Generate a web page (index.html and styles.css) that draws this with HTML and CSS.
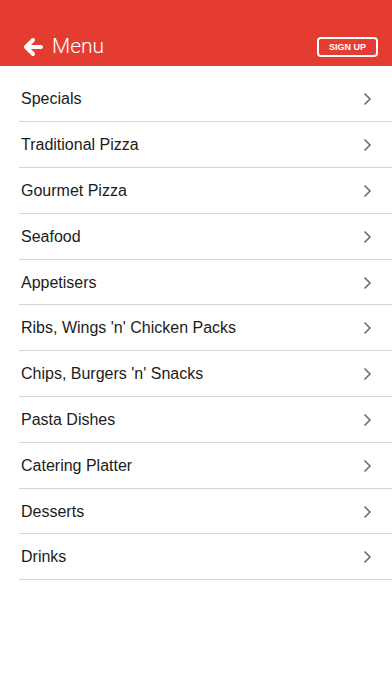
FILE: index.html
```html
<!DOCTYPE html>
<html>
<head>
<meta charset="utf-8">
<link rel="stylesheet" href="styles.css">
</head>
<body>
<header class="topbar">
  <div class="title">
    <svg class="back" width="20" height="20" viewBox="0 0 20 20" aria-hidden="true">
      <path d="M10 3 L3 10 L10 17 M3.5 10 H18" fill="none" stroke="#fff" stroke-width="4" stroke-linecap="round" stroke-linejoin="round"/>
    </svg>
    <span class="title-text">Menu</span>
  </div>
  <button class="signup">SIGN UP</button>
</header>
<ul class="menu">
  <li class="row"><span>Specials</span><svg class="chev" width="9" height="14" viewBox="0 0 9 14"><path d="M1.5 1.5 L7 7 L1.5 12.5" fill="none" stroke="#6e6e6e" stroke-width="1.6"/></svg></li>
  <li class="row"><span>Traditional Pizza</span><svg class="chev" width="9" height="14" viewBox="0 0 9 14"><path d="M1.5 1.5 L7 7 L1.5 12.5" fill="none" stroke="#6e6e6e" stroke-width="1.6"/></svg></li>
  <li class="row"><span>Gourmet Pizza</span><svg class="chev" width="9" height="14" viewBox="0 0 9 14"><path d="M1.5 1.5 L7 7 L1.5 12.5" fill="none" stroke="#6e6e6e" stroke-width="1.6"/></svg></li>
  <li class="row"><span>Seafood</span><svg class="chev" width="9" height="14" viewBox="0 0 9 14"><path d="M1.5 1.5 L7 7 L1.5 12.5" fill="none" stroke="#6e6e6e" stroke-width="1.6"/></svg></li>
  <li class="row"><span>Appetisers</span><svg class="chev" width="9" height="14" viewBox="0 0 9 14"><path d="M1.5 1.5 L7 7 L1.5 12.5" fill="none" stroke="#6e6e6e" stroke-width="1.6"/></svg></li>
  <li class="row"><span>Ribs, Wings 'n' Chicken Packs</span><svg class="chev" width="9" height="14" viewBox="0 0 9 14"><path d="M1.5 1.5 L7 7 L1.5 12.5" fill="none" stroke="#6e6e6e" stroke-width="1.6"/></svg></li>
  <li class="row"><span>Chips, Burgers 'n' Snacks</span><svg class="chev" width="9" height="14" viewBox="0 0 9 14"><path d="M1.5 1.5 L7 7 L1.5 12.5" fill="none" stroke="#6e6e6e" stroke-width="1.6"/></svg></li>
  <li class="row"><span>Pasta Dishes</span><svg class="chev" width="9" height="14" viewBox="0 0 9 14"><path d="M1.5 1.5 L7 7 L1.5 12.5" fill="none" stroke="#6e6e6e" stroke-width="1.6"/></svg></li>
  <li class="row"><span>Catering Platter</span><svg class="chev" width="9" height="14" viewBox="0 0 9 14"><path d="M1.5 1.5 L7 7 L1.5 12.5" fill="none" stroke="#6e6e6e" stroke-width="1.6"/></svg></li>
  <li class="row"><span>Desserts</span><svg class="chev" width="9" height="14" viewBox="0 0 9 14"><path d="M1.5 1.5 L7 7 L1.5 12.5" fill="none" stroke="#6e6e6e" stroke-width="1.6"/></svg></li>
  <li class="row"><span>Drinks</span><svg class="chev" width="9" height="14" viewBox="0 0 9 14"><path d="M1.5 1.5 L7 7 L1.5 12.5" fill="none" stroke="#6e6e6e" stroke-width="1.6"/></svg></li>
</ul>
</body>
</html>
```
FILE: styles.css
```css
* { box-sizing: border-box; }
html, body {
  margin: 0;
  padding: 0;
  background: #fff;
  font-family: "Liberation Sans", Arial, sans-serif;
}
.topbar {
  height: 66px;
  background: #e53c32;
  padding: 28px 14px 0 23px;
  display: flex;
  align-items: flex-start;
  justify-content: space-between;
}
.title {
  display: flex;
  align-items: center;
  height: 38px;
  gap: 9px;
}
.back { display: block; }
.title-text {
  color: #fff;
  font-family: Roboto, "Liberation Sans", sans-serif;
  font-weight: 300;
  font-size: 21px;
  line-height: 1;
  margin-top: -1px;
}
.signup {
  margin-top: 9px;
  width: 61px;
  height: 20px;
  border: 2px solid #fff;
  border-radius: 4px;
  background: transparent;
  color: #fff;
  font-family: "Liberation Sans", Arial, sans-serif;
  font-weight: 700;
  font-size: 9px;
  padding: 0;
  line-height: 16px;
  text-align: center;
}
.menu {
  list-style: none;
  margin: 0;
  padding: 10.5px 0 0 19px;
}
.row {
  height: 45.8px;
  border-bottom: 1px solid #d6d6d6;
  display: flex;
  align-items: center;
  justify-content: space-between;
  padding: 1px 20px 0 2px;
  color: #1c1c1c;
  font-size: 16px;
}
.chev { display: block; }
```
